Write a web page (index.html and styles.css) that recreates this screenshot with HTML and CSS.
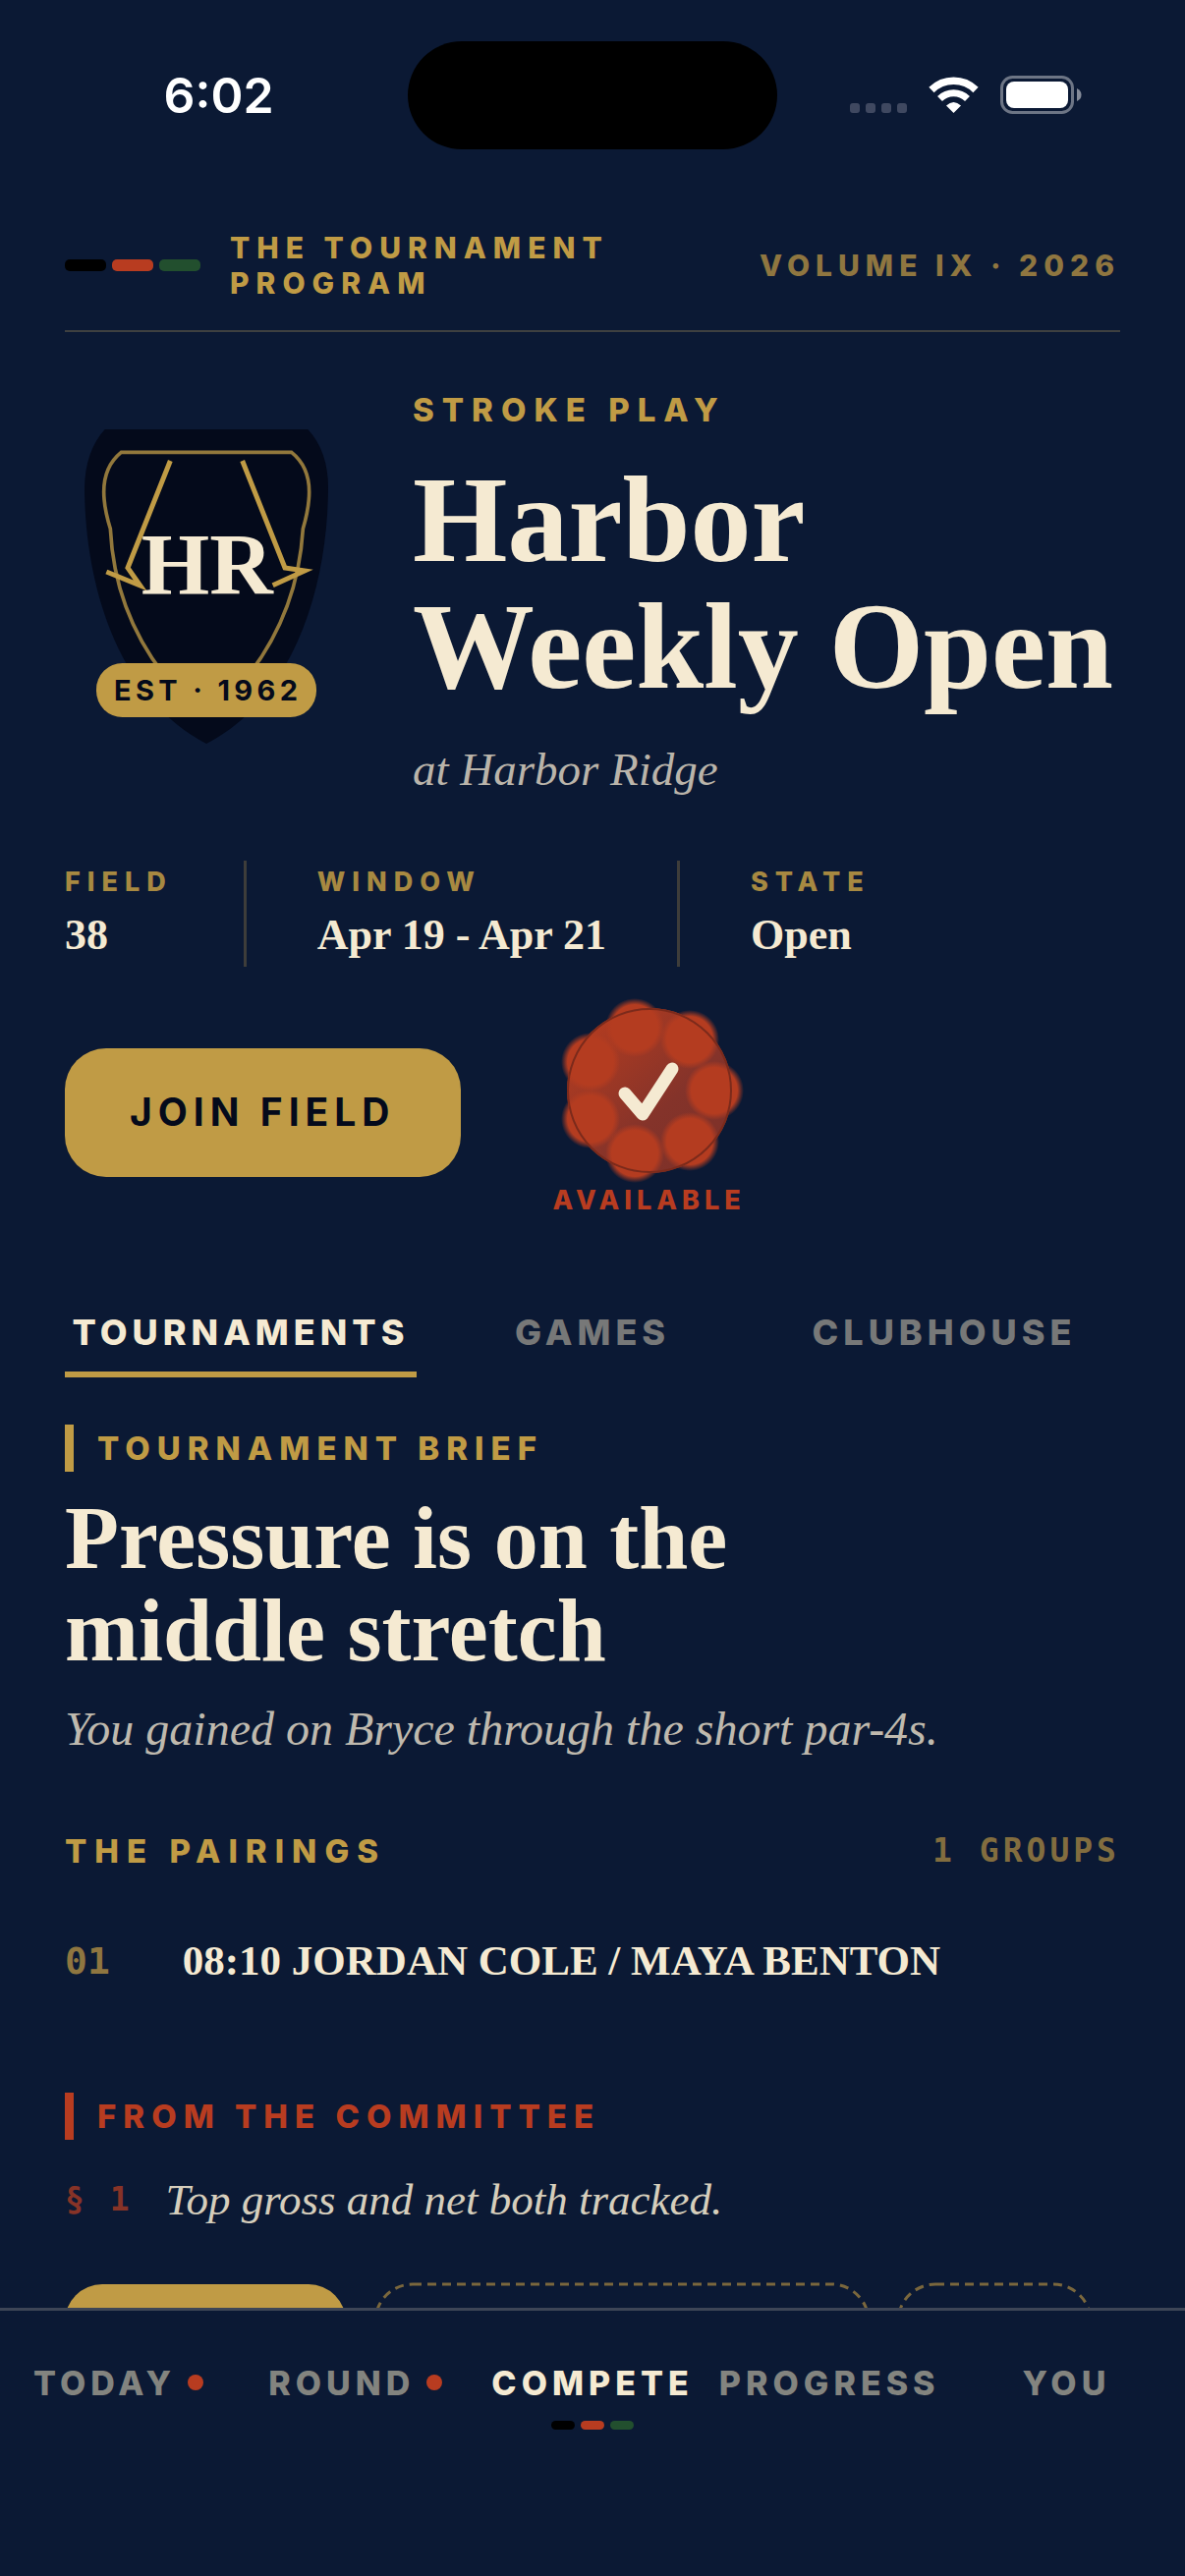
FILE: index.html
```html
<!DOCTYPE html>
<html lang="en">
<head>
    <meta charset="UTF-8">
    <meta name="viewport" content="width=device-width, initial-scale=1">
    <title>Harbor Weekly Open</title>
    <link rel="stylesheet" href="styles.css">
</head>
<body>
    <div class="status-bar">
        <span class="clock">6:02</span>
        <span class="island"></span>
        <svg class="status-icons" viewBox="0 0 236 40" aria-hidden="true">
            <g fill="#3f4860">
                <rect x="0" y="28" width="10" height="10" rx="3"/>
                <rect x="16" y="28" width="10" height="10" rx="3"/>
                <rect x="32" y="28" width="10" height="10" rx="3"/>
                <rect x="48" y="28" width="10" height="10" rx="3"/>
            </g>
            <g fill="none" stroke="#fff">
                <path d="M83 14.500 A32 32 0 0 1 128 14.500" stroke-width="7.500"/>
                <path d="M91.500 23.500 A20 20 0 0 1 119.500 23.500" stroke-width="7"/>
            </g>
            <path d="M98 30.500 Q105.500 23.500 113 30.500 L105.500 38 Z" fill="#fff"/>
            <rect x="154.500" y="1.500" width="72" height="36" rx="11" fill="none" stroke="#6d7585" stroke-width="3"/>
            <rect x="159" y="6" width="63" height="27" rx="8" fill="#fff"/>
            <path d="M231 13 Q235.500 15 235.500 19.500 Q235.500 24 231 26 Z" fill="#858b99"/>
        </svg>
    </div>

    <main>
        <header class="masthead">
            <span class="stripes"><i></i><i></i><i></i></span>
            <span class="program">The Tournament Program</span>
            <span class="volume">Volume IX · 2026</span>
        </header>

        <section class="hero">
            <svg class="crest" viewBox="78 171 864 1008" role="img" aria-label="Harbor Ridge crest">
                <path d="M200 171 H820 Q882 238 882 350 C880 650 780 990 510 1131 C240 990 140 650 138 350 Q140 238 200 171 Z" fill="#040a1b"/>
                <path d="M250 241 H770 Q824 284 824 362 Q824 410 805 475 C795 640 740 790 640 920 H380 C280 790 225 640 217 475 Q197 410 197 362 Q197 284 250 241 Z" fill="none" stroke="#92783c" stroke-width="11"/>
                <g fill="none" stroke="#c09b45" stroke-width="15" stroke-miterlimit="10">
                    <path d="M400 267 L270 594 L308 648 L205 606"/>
                    <path d="M620 267 L750 594 L810 603 L713 647"/>
                </g>
                <text class="crest-initials" x="512" y="672" text-anchor="middle">HR</text>
                <rect x="174" y="885" width="672" height="165" rx="80" fill="#c09b45"/>
                <text class="crest-year" x="515" y="999" text-anchor="middle">EST · 1962</text>
            </svg>
            <div>
                <p class="kicker">Stroke Play</p>
                <h1>Harbor Weekly Open</h1>
                <p class="venue">at Harbor Ridge</p>
            </div>
        </section>

        <dl class="stats">
            <div><dt>Field</dt><dd>38</dd></div>
            <div><dt>Window</dt><dd>Apr 19 - Apr 21</dd></div>
            <div><dt>State</dt><dd>Open</dd></div>
        </dl>

        <div class="actions">
            <button class="join" type="button">Join Field</button>
            <div class="seal">
                <svg viewBox="0 0 168 168" aria-hidden="true">
                    <defs>
                        <linearGradient id="wax" x1="0" y1="0" x2="1" y2="1">
                            <stop offset="0.100" stop-color="#b43c20"/>
                            <stop offset="0.600" stop-color="#84332a"/>
                            <stop offset="1" stop-color="#7c3028"/>
                        </linearGradient>
                        <radialGradient id="petal">
                            <stop offset="0.780" stop-color="#b43c20"/>
                            <stop offset="1" stop-color="#b43c20" stop-opacity="0"/>
                        </radialGradient>
                    </defs>
                    <circle cx="84" cy="84" r="84" fill="url(#wax)"/>
                    <g fill="url(#petal)">
                        <circle cx="150" cy="84" r="30"/>
                        <circle cx="125" cy="136" r="30"/>
                        <circle cx="69" cy="148" r="30"/>
                        <circle cx="24" cy="113" r="30"/>
                        <circle cx="24" cy="55" r="30"/>
                        <circle cx="69" cy="20" r="30"/>
                        <circle cx="125" cy="32" r="30"/>
                    </g>
                    <circle cx="84" cy="84" r="83" fill="none" stroke="#7b2a1b" stroke-width="2"/>
                    <path d="M59 87 L77 108 L107 62" fill="none" stroke="#f5ead2" stroke-width="13" stroke-linecap="round" stroke-linejoin="round"/>
                </svg>
                <span>Available</span>
            </div>
        </div>

        <nav class="tabs">
            <a href="#tournaments" class="active">Tournaments</a>
            <a href="#games">Games</a>
            <a href="#clubhouse">Clubhouse</a>
        </nav>

        <section class="brief" id="tournaments">
            <h3 class="flag">Tournament Brief</h3>
            <h2>Pressure is on the<br>middle stretch</h2>
            <p>You gained on Bryce through the short par-4s.</p>
        </section>

        <section class="pairings">
            <div class="pairings-head">
                <h3>The Pairings</h3>
                <span>1 Groups</span>
            </div>
            <div class="pairing">
                <span class="num">01</span>
                <span class="names">08:10 JORDAN COLE / MAYA BENTON</span>
            </div>
        </section>

        <section class="committee">
            <h3 class="flag red">From the Committee</h3>
            <p class="note"><span>§ 1</span><em>Top gross and net both tracked.</em></p>
        </section>

        <div class="chips">
            <button class="chip solid" type="button" aria-label="Join"></button>
            <button class="chip wide" type="button" aria-label="Details">
                <svg aria-hidden="true"><rect width="100%" height="100%" rx="38"/></svg>
            </button>
            <button class="chip" type="button" aria-label="More">
                <svg aria-hidden="true"><rect width="100%" height="100%" rx="38"/></svg>
            </button>
        </div>
    </main>

    <nav class="bottom-nav">
        <a href="#today">Today<b class="dot"></b></a>
        <a href="#round">Round<b class="dot"></b></a>
        <a href="#compete" class="active">Compete<span class="stripes"><i></i><i></i><i></i></span></a>
        <a href="#progress">Progress</a>
        <a href="#you">You</a>
    </nav>
</body>
</html>
```
FILE: styles.css
```css
:root {
    --navy: #0b1934;
    --ink: #040a1b;
    --gold: #c09b45;
    --cream: #f5ead2;
    --red: #b83c20;
    --green: #224f2e;
    --serif: "Liberation Serif", serif;
    --sans: Inter, sans-serif;
    --mono: "DejaVu Sans Mono", monospace;
}

* { box-sizing: border-box; margin: 0; padding: 0; }

body {
    display: flex;
    flex-direction: column;
    height: 100vh;
    background: var(--navy);
    color: var(--cream);
    font-family: var(--sans);
    font-weight: 800;
}

a { color: inherit; text-decoration: none; }

/* status bar */
.status-bar {
    display: grid;
    grid-template-columns: 1fr 376px 1fr;
    align-items: center;
    justify-items: center;
    padding: 42px 0 34px;
    flex: none;
}
.clock { padding-left: 30px; font-size: 50px; font-weight: 600; line-height: 60px; color: #fff; }
.island { width: 376px; height: 110px; border-radius: 55px; background: #000; }
.status-icons { width: 236px; height: 40px; margin-right: 32px; }

main {
    flex: 1;
    min-height: 0;
    overflow-y: auto;
    scrollbar-width: none;
    padding: 48px 66px 0;
}

/* masthead */
.masthead {
    display: flex;
    align-items: center;
    gap: 30px;
    padding-bottom: 30px;
    border-bottom: 2px solid #3e4040;
    font-size: 30px;
    line-height: 36px;
    letter-spacing: 7px;
    text-transform: uppercase;
    color: var(--gold);
}
.program { flex: 1; padding-right: 60px; }
.volume { white-space: nowrap; color: #8f7640; letter-spacing: 6px; }

.stripes { display: flex; gap: 6px; }
.stripes i { width: 42px; height: 12px; border-radius: 5px; background: #000; }
.stripes i:nth-child(2) { background: var(--red); }
.stripes i:nth-child(3) { background: var(--green); }

/* hero */
.hero {
    display: grid;
    grid-template-columns: 288px 1fr;
    gap: 66px;
    align-items: center;
    padding-top: 59px;
}
.crest { width: 288px; height: 336px; }
.crest-initials { font: 700 268px var(--serif); fill: var(--cream); }
.crest-year { font: 700 87px var(--sans); letter-spacing: 13px; fill: var(--ink); }
.kicker { font-size: 33px; line-height: 40px; letter-spacing: 8px; text-transform: uppercase; color: var(--gold); }
h1 { margin: 28px 0 30px; font: 700 124px/129px var(--serif); }
.venue { font: italic 400 47px/60px var(--serif); color: #bab4aa; }

/* stats */
.stats { display: flex; margin-top: 63px; }
.stats div { padding: 6px 72px 4px; border-left: 3px solid #3e3d3a; }
.stats div:first-child { padding-left: 0; border-left: 0; }
dt { font-size: 27px; line-height: 32px; letter-spacing: 7px; text-transform: uppercase; color: #a78941; }
dd { margin-top: 10px; font: 700 44px/56px var(--serif); }

/* actions */
.actions { display: flex; align-items: center; gap: 94px; margin-top: 42px; }
.join {
    padding: 42px 66px 43px;
    border: 0;
    border-radius: 42px;
    background: var(--gold);
    color: var(--ink);
    font: 700 39px/46px var(--sans);
    letter-spacing: 6px;
    text-transform: uppercase;
}
.seal { display: flex; flex-direction: column; align-items: center; gap: 12px; }
.seal svg { width: 168px; height: 168px; overflow: visible; }
.seal span { font-size: 27px; line-height: 32px; letter-spacing: 5px; text-transform: uppercase; color: var(--red); }

/* section tabs */
.tabs { display: grid; grid-template-columns: repeat(3, 1fr); margin-top: 96px; }
.tabs a {
    padding-bottom: 18px;
    border-bottom: 6px solid transparent;
    font-size: 36px;
    line-height: 44px;
    letter-spacing: 5px;
    text-align: center;
    text-transform: uppercase;
    color: #777878;
}
.tabs .active { color: var(--cream); border-color: var(--gold); }

/* content */
h3 { font-size: 33px; font-weight: 800; line-height: 40px; letter-spacing: 8px; text-transform: uppercase; color: var(--gold); }
.flag { padding-left: 24px; border-left: 9px solid var(--gold); line-height: 48px; letter-spacing: 7px; }
.flag.red { color: var(--red); border-color: var(--red); }

.brief { margin-top: 48px; }
.brief h2 { margin: 21px 0 23px; font: 700 90px/94px var(--serif); }
.brief p { font: italic 400 48px/60px var(--serif); color: #bfb9ae; }

.pairings { margin-top: 74px; }
.pairings-head { display: flex; justify-content: space-between; }
.pairings-head span { font: 700 33px/40px var(--mono); letter-spacing: 4px; text-transform: uppercase; color: #826d3f; }
.pairing { display: flex; align-items: center; gap: 74px; margin-top: 64px; }
.num { font: 700 38px/56px var(--mono); color: #8f7640; }
.names { font: 700 43px/56px var(--serif); }

.committee { margin-top: 106px; }
.note { display: flex; align-items: center; gap: 34px; margin-top: 33px; }
.note span { font: 700 33px/56px var(--mono); letter-spacing: 3px; color: #873327; }
.note em { font: italic 400 45px/56px var(--serif); color: #d6cebc; }

.chips { display: flex; gap: 30px; margin-top: 58px; }
.chip { width: 196px; height: 110px; border: 0; border-radius: 38px; background: none; }
.chip.wide { width: 502px; }
.chip.solid { width: 286px; background: var(--gold); }
.chip svg { display: block; width: 100%; height: 100%; overflow: visible; }
.chip rect { fill: none; stroke: #7a673d; stroke-width: 3; stroke-dasharray: 9 6; }

/* bottom navigation */
.bottom-nav {
    display: grid;
    grid-template-columns: repeat(5, 1fr);
    flex: none;
    height: 273px;
    padding-top: 53px;
    border-top: 3px solid #3d4556;
}
.bottom-nav a {
    position: relative;
    display: flex;
    align-items: center;
    justify-content: center;
    gap: 12px;
    height: 40px;
    font-size: 34px;
    letter-spacing: 5px;
    text-transform: uppercase;
    color: #83847f;
}
.bottom-nav .active { color: var(--cream); }
.dot { width: 16px; height: 16px; border-radius: 50%; background: var(--red); }
.bottom-nav .stripes { position: absolute; top: 59px; }
.bottom-nav .stripes i { width: 24px; height: 9px; }
```
